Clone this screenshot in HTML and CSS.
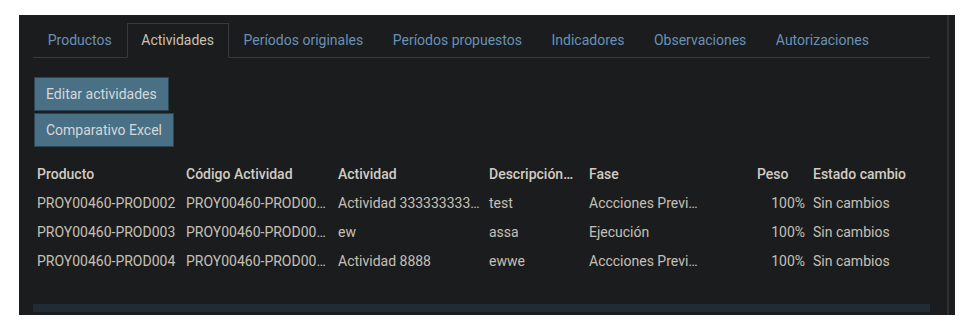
FILE: index.html
```html
<!DOCTYPE html>
<html lang="es">
<head>
    <meta charset="UTF-8">
    <title>Actividades</title>
    <link rel="stylesheet" href="styles.css">
</head>
<body>

    <div class="panel">
        <div class="panel-main">

            <!-- Tabs -->
            <ul class="tabs">
                <li class="tab">Productos</li>
                <li class="tab active">Actividades</li>
                <li class="tab">Períodos originales</li>
                <li class="tab">Períodos propuestos</li>
                <li class="tab">Indicadores</li>
                <li class="tab">Observaciones</li>
                <li class="tab">Autorizaciones</li>
            </ul>

            <!-- Actions -->
            <div class="actions">
                <button class="btn">Editar actividades</button>
                <button class="btn">Comparativo Excel</button>
            </div>

            <!-- Activities table -->
            <table class="grid">
                <colgroup>
                    <col class="c-prod">
                    <col class="c-cod">
                    <col class="c-act">
                    <col class="c-desc">
                    <col class="c-fase">
                    <col class="c-peso">
                    <col class="c-estado">
                </colgroup>
                <tr>
                    <th>Producto</th>
                    <th>Código Actividad</th>
                    <th>Actividad</th>
                    <th title="Descripción actividad">Descripción…</th>
                    <th>Fase</th>
                    <th>Peso</th>
                    <th>Estado cambio</th>
                </tr>
                <tr>
                    <td>PROY00460-PROD002</td>
                    <td>PROY00460-PROD002-ACT001</td>
                    <td>Actividad 3333333333333</td>
                    <td>test</td>
                    <td><span class="clip">Accciones Previas</span></td>
                    <td class="num">100%</td>
                    <td>Sin cambios</td>
                </tr>
                <tr>
                    <td>PROY00460-PROD003</td>
                    <td>PROY00460-PROD003-ACT001</td>
                    <td>ew</td>
                    <td>assa</td>
                    <td><span class="clip">Ejecución</span></td>
                    <td class="num">100%</td>
                    <td>Sin cambios</td>
                </tr>
                <tr>
                    <td>PROY00460-PROD004</td>
                    <td>PROY00460-PROD004-ACT001</td>
                    <td>Actividad 8888</td>
                    <td>ewwe</td>
                    <td><span class="clip">Accciones Previas</span></td>
                    <td class="num">100%</td>
                    <td>Sin cambios</td>
                </tr>
            </table>

            <div class="hscroll"></div>
        </div>
        <div class="vscroll"></div>
    </div>

</body>
</html>
```

FILE: styles.css
```css
* {
    margin: 0;
    padding: 0;
    box-sizing: border-box;
}

body {
    background-color: #ffffff;
    font-family: Roboto, "Liberation Sans", sans-serif;
    font-size: 14px;
    padding: 15px 15px 15px 19px;
}

/* Panel */
.panel {
    display: flex;
    height: 300px;
    background-color: #1b1c1e;
}

.panel-main {
    flex: 1;
    display: flex;
    flex-direction: column;
    padding: 8px 17px 3px 14px;
}

.vscroll {
    width: 8px;
    border-left: 2px solid #2f3033;
}

/* Tabs */
.tabs {
    list-style: none;
    display: flex;
    border-bottom: 1px solid #36383b;
}

.tab {
    height: 35px;
    line-height: 33px;
    padding: 0 13.75px;
    border: 1px solid transparent;
    margin-bottom: -1px;
    color: #6892b6;
}

.active {
    border-color: #38393c;
    border-bottom-color: #1b1c1e;
    color: #cbc1b1;
}

/* Buttons */
.actions {
    display: flex;
    flex-direction: column;
    align-items: flex-start;
    gap: 2px;
    margin: 19px 0 12px 1px;
}

.btn {
    font-family: inherit;
    font-size: 14px;
    height: 34px;
    padding: 0 11px;
    background-color: #4a7085;
    border: 1px solid #2c4555;
    color: #d4d8da;
}

/* Table */
.grid {
    width: 100%;
    table-layout: fixed;
    border-collapse: collapse;
    color: #c6c0b6;
}

.c-prod { width: 149px; }
.c-cod { width: 152px; }
.c-act { width: 151px; }
.c-desc { width: 100px; }
.c-fase { width: 168px; }
.c-peso { width: 56px; }
.c-estado { width: 121px; }

.grid th,
.grid td {
    height: 29px;
    padding: 0 4px;
    text-align: left;
    white-space: nowrap;
    overflow: hidden;
    text-overflow: ellipsis;
}

.grid th {
    font-weight: 500;
    color: #d2ccc2;
}

.grid td.num {
    text-align: right;
}

.clip {
    display: block;
    max-width: 113px;
    overflow: hidden;
    text-overflow: ellipsis;
}

.hscroll {
    margin-top: auto;
    height: 8px;
    background-color: #1f2c35;
}
```
